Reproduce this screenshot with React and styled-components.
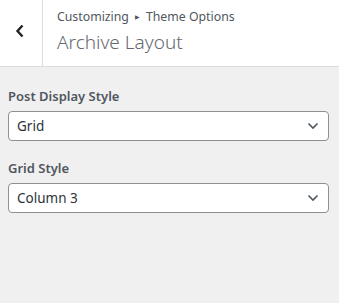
import React from 'react';
import styled, { createGlobalStyle } from 'styled-components';

const GlobalStyle = createGlobalStyle`
  html, body {
    margin: 0;
    padding: 0;
    background: #f0f0f1;
    font-family: "Noto Sans", "Open Sans", sans-serif;
  }
`;

const Panel = styled.div`
  width: 339px;
  height: 303px;
  background: #f0f0f1;
`;

const Header = styled.div`
  display: flex;
  height: 66px;
  background: #fff;
  border-bottom: 1px solid #dcdcde;
`;

const BackButton = styled.button`
  width: 43px;
  flex: none;
  display: flex;
  align-items: center;
  justify-content: center;
  padding: 0 2px 5px 0;
  border: none;
  border-right: 1px solid #dcdcde;
  background: #fff;
  color: #1d2327;
`;

const TitleBlock = styled.div`
  padding: 7px 0 0 14px;
  color: #50575e;
`;

const Crumbs = styled.div`
  font-size: 12.3px;
  line-height: 20px;
  color: #50575e;
`;

const Arrow = styled.span`
  font-size: 6px;
  margin: 0 6px;
  vertical-align: 2px;
`;

const Title = styled.div`
  font-size: 19px;
  font-weight: 300;
  line-height: 28px;
  margin-top: 1px;
  color: #646970;
`;

const Body = styled.div`
  padding: 19px 10px 0 8px;
`;

const Field = styled.div`
  margin-bottom: 17px;
`;

const Label = styled.div`
  font-size: 13px;
  font-weight: 600;
  line-height: 20px;
  color: #50575e;
  margin-bottom: 5px;
`;

const SelectBox = styled.div`
  display: flex;
  align-items: center;
  justify-content: space-between;
  height: 28px;
  padding: 0 9px 0 8px;
  background: #fff;
  border: 1px solid #8c8f94;
  border-radius: 4px;
  font-size: 13.5px;
  color: #2c3338;
`;

const Chevron = () => (
  <svg width="12" height="8" viewBox="0 0 12 8">
    <path d="M1.5 1.5 L6 6 L10.5 1.5" fill="none" stroke="#50575e" strokeWidth="1.6" />
  </svg>
);

const BackIcon = () => (
  <svg width="10" height="14" viewBox="0 0 10 14">
    <path d="M7.5 1.5 L2.5 7 L7.5 12.5" fill="none" stroke="#1d2327" strokeWidth="2.4" />
  </svg>
);

function Select({ value }) {
  return (
    <SelectBox>
      <span>{value}</span>
      <Chevron />
    </SelectBox>
  );
}

export default function App() {
  return (
    <Panel>
      <GlobalStyle />
      <Header>
        <BackButton><BackIcon /></BackButton>
        <TitleBlock>
          <Crumbs>Customizing<Arrow>▶</Arrow>Theme Options</Crumbs>
          <Title>Archive Layout</Title>
        </TitleBlock>
      </Header>
      <Body>
        <Field>
          <Label>Post Display Style</Label>
          <Select value="Grid" />
        </Field>
        <Field>
          <Label>Grid Style</Label>
          <Select value="Column 3" />
        </Field>
      </Body>
    </Panel>
  );
}
